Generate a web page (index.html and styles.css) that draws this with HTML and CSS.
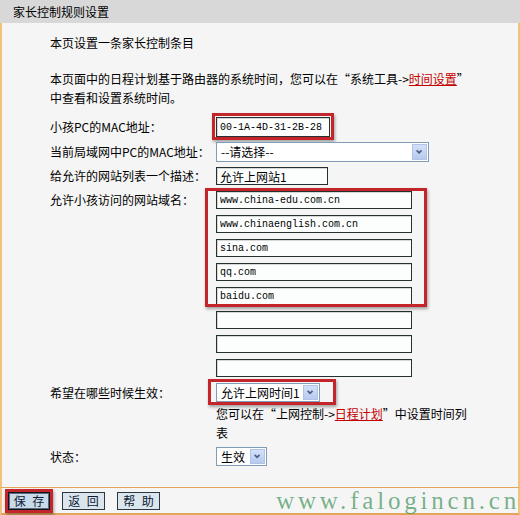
FILE: index.html
```html
<!DOCTYPE html>
<html lang="zh-CN">
<head>
<meta charset="utf-8">
<title>家长控制规则设置</title>
<link rel="stylesheet" href="styles.css">
</head>
<body>
<div class="page">
  <div class="title">家长控制规则设置</div>
  <div class="content">
    <p class="intro">本页设置一条家长控制条目</p>
    <p class="note">本页面中的日程计划基于路由器的系统时间，您可以在“系统工具-&gt;<a class="link">时间设置</a>”<br>中查看和设置系统时间。</p>

    <div class="row row-mac">
      <span class="label lh20">小孩PC的MAC地址<span class="colon">：</span></span>
      <div class="field">
        <input class="txt mono mac" value="00-1A-4D-31-2B-28">
        <span class="mark mark-mac"></span>
      </div>
    </div>

    <div class="row row-select">
      <span class="label lh20">当前局域网中PC的MAC地址<span class="colon">：</span></span>
      <div class="field">
        <div class="select sel-mac"><span class="val">--请选择--</span><span class="arrow"><svg viewBox="0 0 16 16" width="15" height="16"><path d="M4.5 6 L7.5 9 L10.5 6" fill="none" stroke="#4a5d87" stroke-width="2"/></svg></span></div>
      </div>
    </div>

    <div class="row row-desc">
      <span class="label lh18">给允许的网站列表一个描述<span class="colon">：</span></span>
      <div class="field">
        <input class="txt cjk desc" value="允许上网站1">
      </div>
    </div>

    <div class="row row-domains">
      <span class="label lh18">允许小孩访问的网站域名<span class="colon">：</span></span>
      <div class="field">
        <div class="domains">
          <input class="txt mono dom" value="www.china-edu.com.cn">
          <input class="txt mono dom" value="www.chinaenglish.com.cn">
          <input class="txt mono dom" value="sina.com">
          <input class="txt mono dom" value="qq.com">
          <input class="txt mono dom" value="baidu.com">
          <input class="txt mono dom" value="">
          <input class="txt mono dom" value="">
          <input class="txt mono dom" value="">
        </div>
        <span class="mark mark-dom"></span>
      </div>
    </div>

    <div class="row row-time">
      <span class="label lh19">希望在哪些时候生效<span class="colon">：</span></span>
      <div class="field">
        <div class="select sel-time"><span class="val">允许上网时间1</span><span class="arrow"><svg viewBox="0 0 16 16" width="15" height="15"><path d="M4.5 6 L7.5 9 L10.5 6" fill="none" stroke="#4a5d87" stroke-width="2"/></svg></span></div>
        <span class="mark mark-time"></span>
      </div>
    </div>

    <div class="row row-help">
      <span class="label"></span>
      <p class="help">您可以在“上网控制-&gt;<a class="link">日程计划</a>”中设置时间列<br>表</p>
    </div>

    <div class="row row-status">
      <span class="label lh19">状态<span class="colon">：</span></span>
      <div class="field">
        <div class="select sel-status"><span class="val">生效</span><span class="arrow"><svg viewBox="0 0 16 16" width="15" height="15"><path d="M4.5 6 L7.5 9 L10.5 6" fill="none" stroke="#4a5d87" stroke-width="2"/></svg></span></div>
      </div>
    </div>
  </div>

  <div class="footer">
    <span class="btn-wrap">
      <button class="btn btn-save">保 存</button>
      <span class="mark mark-save"></span>
    </span>
    <button class="btn btn-back">返 回</button>
    <button class="btn btn-help">帮 助</button>
  </div>

  <div class="watermark">www.falogincn.cn</div>
</div>
</body>
</html>
```

FILE: styles.css
```css
* { box-sizing: border-box; }
html, body { margin: 0; padding: 0; }
body {
  font-family: "Noto Sans CJK SC", "Noto Sans", sans-serif;
  font-size: 12px;
  color: #000;
  background: #f5f5f5;
}
.page {
  position: relative;
  width: 520px;
  height: 515px;
  overflow: hidden;
  background: #f5f5f5;
}
.title {
  height: 23px;
  line-height: 23px;
  padding-left: 13px;
  background: #d8d8d8;
}
.content {
  height: 465px;
  padding: 10px 0 0 48px;
  background: #f5f5f5;
  border-left: 2px solid #f2c27c;
  border-right: 2px solid #f2c27c;
  border-bottom: 1px solid #e2a65b;
}
.intro, .note, .help { margin: 0; line-height: 19px; }
.note { margin-top: 17px; }
.link { color: #c40000; text-decoration: underline; }

.row { display: grid; grid-template-columns: 166px 1fr; }
.label { white-space: nowrap; }
.colon { display: inline-block; width: 12px; text-align: center; }
.lh18 { line-height: 18px; }
.lh19 { line-height: 19px; }
.lh20 { line-height: 20px; }
.field { position: relative; }

.row-mac { margin-top: 10px; }
.row-select { margin-top: 5px; }
.row-desc { margin-top: 5px; }
.row-domains { margin-top: 6px; }
.row-time { margin-top: 6px; }
.row-help { margin-top: 2px; }
.row-status { margin-top: 5px; }

.txt {
  display: block;
  margin: 0;
  height: 18px;
  padding: 0 3px;
  border: 1px solid #26302f;
  box-shadow: inset 1px 1px 0 rgba(0,0,0,0.15);
  background: #fcfefe;
  color: #000;
  outline: none;
}
.mono { font: 10px "Liberation Mono", "DejaVu Sans Mono", monospace; }
.cjk { font: 12px "Noto Sans CJK SC", sans-serif; }
.mac { width: 114px; height: 20px; }
.desc { width: 112px; }
.domains { display: flex; flex-direction: column; gap: 6px; }
.dom { width: 196px; }

.select {
  display: flex;
  align-items: stretch;
  height: 20px;
  padding: 1px;
  border: 1px solid #7f9db9;
  background: #fff;
}
.select .val {
  flex: 1;
  padding-left: 3px;
  line-height: 16px;
  white-space: nowrap;
}
.select .arrow {
  width: 15px;
  display: flex;
  align-items: center;
  justify-content: center;
  background: linear-gradient(#d3e0f8, #b8caee);
  border: 1px solid #b0c3ea;
}
.select .arrow svg { display: block; }
.sel-mac { width: 213px; }
.sel-time { width: 104px; height: 19px; }
.sel-status { width: 51px; height: 19px; }

.mark {
  position: absolute;
  border: 3px solid #c4252a;
  box-shadow: 1px 2px 3px rgba(0,0,0,0.35);
  pointer-events: none;
}
.mark-mac { left: -4px; top: -4px; width: 122px; height: 27px; }
.mark-dom { left: -11px; top: -3px; width: 222px; height: 119px; }
.mark-time { left: -8px; top: -4px; width: 128px; height: 26px; }

.footer {
  height: 27px;
  display: flex;
  align-items: center;
  gap: 12px;
  padding-left: 6px;
  background: #f5f5f5;
  border-left: 2px solid #f2c27c;
  border-right: 2px solid #f2c27c;
  border-bottom: 2px solid #e2a65b;
}
.btn-wrap { position: relative; display: block; }
.btn {
  display: block;
  margin: 0;
  height: 18px;
  width: 43px;
  padding: 0;
  font: 12px/16px "Noto Sans CJK SC", sans-serif;
  word-spacing: 4px;
  color: #0c1a33;
  background: #dbe5ee;
  border: 1px solid #2c3644;
}
.btn-save {
  width: 42px;
  background: #c9dbea;
  border: 1px solid #10161e;
  box-shadow: inset 0 0 0 1px #5a6a7c;
}
.mark-save { left: -3px; top: -3px; width: 48px; height: 24px; }

.watermark {
  position: absolute;
  right: 0;
  top: 488px;
  font: 25px/25px "Liberation Serif", serif;
  letter-spacing: 3.8px;
  color: rgba(70, 150, 95, 0.72);
  white-space: nowrap;
  pointer-events: none;
}
```
